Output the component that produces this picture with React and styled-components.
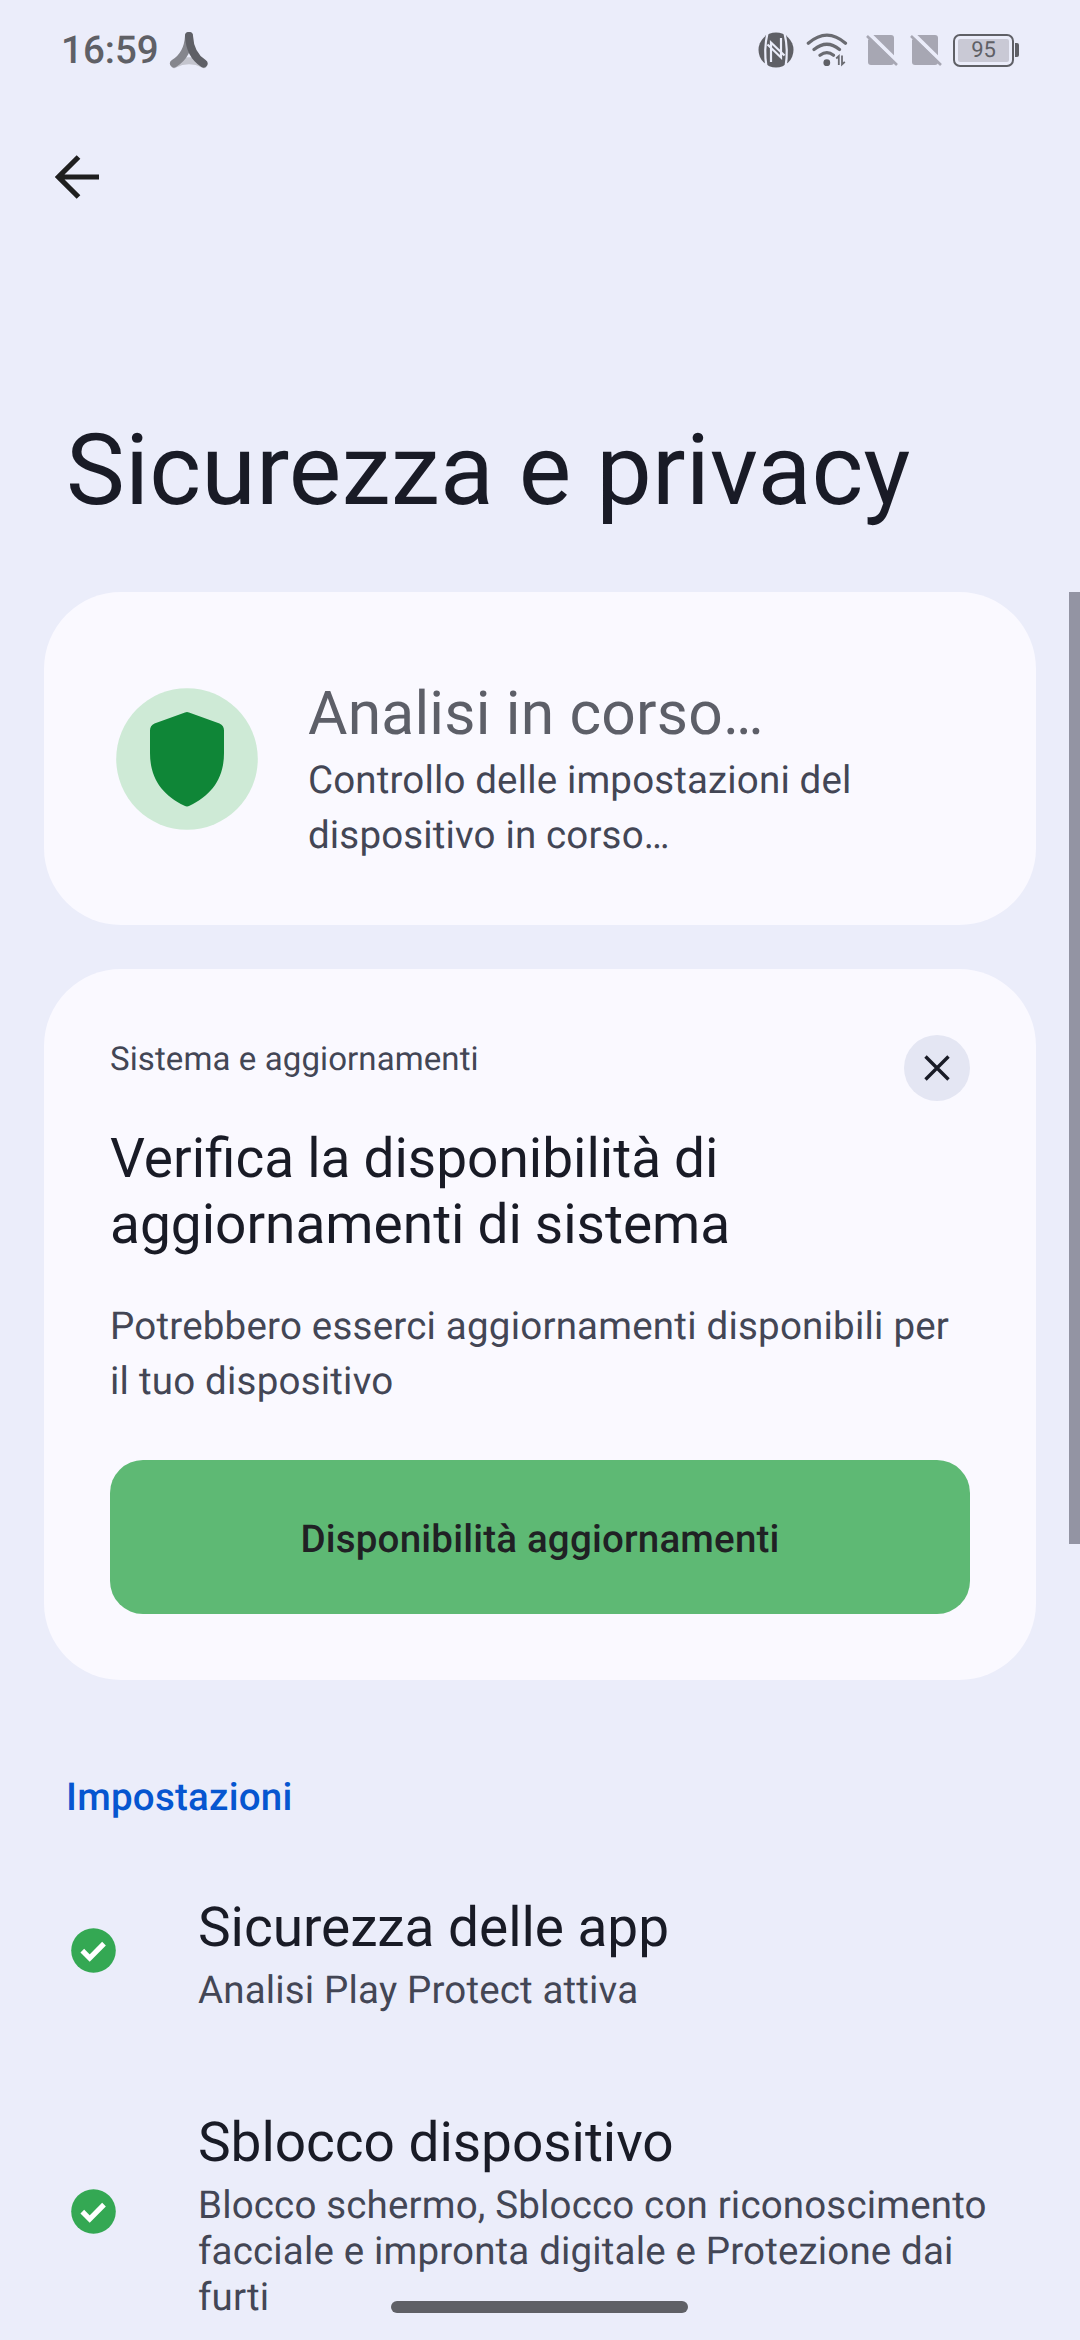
import React from 'react';
import styled, { createGlobalStyle } from 'styled-components';

const GlobalStyle = createGlobalStyle`
  * {
    box-sizing: border-box;
  }
  body {
    margin: 0;
    background: #ebedfa;
    font-family: Roboto, 'Noto Sans', sans-serif;
    text-rendering: geometricPrecision;
  }
  svg {
    display: block;
    flex: none;
  }
`;

const settings = [
  { title: 'Sicurezza delle app', lines: ['Analisi Play Protect attiva'] },
  {
    title: 'Sblocco dispositivo',
    lines: [
      'Blocco schermo, Sblocco con riconoscimento',
      'facciale e impronta digitale e Protezione dai',
      'furti',
    ],
  },
];

const AppLogoIcon = () => (
  <svg width="40" height="38" viewBox="0 0 40 38" fill="none" strokeLinecap="round">
    <path d="M5 33.5Q20 26 35 33.5" stroke="#c4c5ce" strokeWidth="7" />
    <path d="M20 5Q19 24 5 32.5" stroke="#85868d" strokeWidth="8" />
    <path d="M20 5Q21 24 34.5 32.5" stroke="#5f6066" strokeWidth="8" />
  </svg>
);

const NfcIcon = () => (
  <svg width="36" height="36" viewBox="0 0 36 36">
    <circle cx="18" cy="18" r="17.5" fill="#5f6066" />
    <g fill="none" stroke="#ebedfa" strokeWidth="2.2">
      <path d="M9.5 1Q5.5 18 8.5 35M26.5 1Q30.5 18 27.500 35" />
      <path d="M13 30V10.5L26.5 23.5M23 6V25.5L9.5 12.5" />
    </g>
  </svg>
);

const WifiIcon = () => (
  <svg width="42" height="34" viewBox="0 0 42 34" fill="none" stroke="#6a6b71" strokeLinecap="round">
    <path d="M2.3 10.3Q21 -6 39.5 10.3M8 16.5Q21 6 33.5 16.5M14 22.3Q21 17 27.5 22.3" strokeWidth="3.2" />
    <circle cx="20.8" cy="29.7" r="3.4" fill="#5f6066" stroke="none" />
    <path d="M30.2 25.5l2.6-2.4v9M36 22.5v9l2.8-2.6" strokeWidth="1.8" strokeLinecap="butt" />
  </svg>
);

const NoSimIcon = () => (
  <svg width="32" height="32" viewBox="0 0 32 32">
    <path d="M7 1h18a3 3 0 0 1 3 3v24a3 3 0 0 1-3 3H5a3 3 0 0 1-3-3V6z" fill="#a7a7b3" />
    <path d="M2 -1.5L33 29" stroke="#ebedfa" strokeWidth="4" />
    <path d="M1 2L31 31" stroke="#a7a7b3" strokeWidth="2.6" />
  </svg>
);

const BackIcon = () => (
  <svg width="44" height="44" viewBox="0 0 44 44" fill="none" stroke="#1f1f1f" strokeWidth="5.2">
    <path d="M23.5 2L3.4 22l20.1 20M3.4 22H44" />
  </svg>
);

const ShieldIcon = () => (
  <svg width="142" height="142" viewBox="0 0 142 142">
    <circle cx="71" cy="71" r="70.8" fill="#ceead6" />
    <path
      d="M69 24.5q2-.8 4 0l30.5 11q4.5 2 4.5 7V65c0 25-12 42-34.5 52.800q-2.5 1.2-5 0C46 107 34 90 34 65V42.5q0-5 4.5-7z"
      fill="#0f8637"
    />
  </svg>
);

const CheckIcon = () => (
  <svg width="45" height="45" viewBox="0 0 45 45">
    <circle cx="22.5" cy="22.5" r="22.3" fill="#34a853" />
    <path d="M11.3 22.7l7.4 7.4L33 15.6" fill="none" stroke="#fff" strokeWidth="5.2" />
  </svg>
);

const App = () => {
  return (
    <Screen>
      <GlobalStyle />
      <StatusBar>
        <Clock>16:59</Clock>
        <AppLogoIcon />
        <StatusIcons>
          <NfcIcon />
          <WifiIcon />
          <NoSimIcon />
          <NoSimIcon />
          <Battery>
            <span>95</span>
          </Battery>
        </StatusIcons>
      </StatusBar>
      <Toolbar>
        <BackIcon />
      </Toolbar>
      <PageTitle>Sicurezza e privacy</PageTitle>
      <Cards>
        <ScanCard>
          <ShieldIcon />
          <ScanText>
            <ScanTitle>Analisi in corso…</ScanTitle>
            <BodyText>
              Controllo delle impostazioni del
              <br />
              dispositivo in corso…
            </BodyText>
          </ScanText>
        </ScanCard>
        <UpdateCard>
          <UpdateHeader>
            <Label>Sistema e aggiornamenti</Label>
            <CloseButton aria-label="Chiudi">
              <svg width="26" height="26" viewBox="0 0 26 26" stroke="#191b26" strokeWidth="3.4">
                <path d="M1.5 1.5l23 23M24.5 1.5l-23 23" />
              </svg>
            </CloseButton>
          </UpdateHeader>
          <UpdateTitle>
            Verifica la disponibilità di
            <br />
            aggiornamenti di sistema
          </UpdateTitle>
          <BodyText $spacing="0.21px">
            Potrebbero esserci aggiornamenti disponibili per
            <br />
            il tuo dispositivo
          </BodyText>
          <ActionButton>Disponibilità aggiornamenti</ActionButton>
        </UpdateCard>
      </Cards>
      <SectionTitle>Impostazioni</SectionTitle>
      {settings.map(({ title, lines }) => (
        <SettingRow key={title}>
          <CheckIcon />
          <div>
            <SettingTitle>{title}</SettingTitle>
            {lines.map((line) => (
              <SettingSummary key={line}>{line}</SettingSummary>
            ))}
          </div>
        </SettingRow>
      ))}
      <ScrollThumb />
      <HomeIndicator />
    </Screen>
  );
};

const Screen = styled.div`
  position: relative;
  width: 1080px;
  height: 2340px;
  overflow: hidden;
  background: #ebedfa;
  color: #191b26;
  white-space: nowrap;
`;

const StatusBar = styled.header`
  display: flex;
  align-items: center;
  height: 100px;
  padding: 0 60px 0 61px;
  color: #5f6066;
`;

const Clock = styled.span`
  width: 108px;
  font-size: 38.5px;
  font-weight: 500;
`;

const StatusIcons = styled.div`
  display: flex;
  align-items: center;
  margin-left: auto;
  svg:nth-child(2) {
    margin-left: 12px;
  }
  svg:nth-child(3) {
    margin-left: 18px;
  }
  svg:nth-child(4) {
    margin-left: 12px;
  }
`;

const Battery = styled.div`
  position: relative;
  width: 61px;
  height: 33px;
  margin: 0 6px 0 11px;
  padding: 3px;
  border: 2px solid #5f6066;
  border-radius: 7px;
  span {
    display: block;
    height: 23px;
    border-radius: 2px;
    background: #c9c9d5;
    font-size: 22px;
    line-height: 24px;
    text-align: center;
  }
  &::after {
    content: '';
    position: absolute;
    top: 7px;
    right: -7px;
    width: 4px;
    height: 14px;
    border-radius: 0 2px 2px 0;
    background: #5f6066;
  }
`;

const Toolbar = styled.nav`
  height: 154px;
  padding: 55px 55px 0;
`;

const PageTitle = styled.h1`
  height: 338px;
  margin: 0;
  padding: 159px 66px 0;
  font-size: 99px;
  font-weight: 400;
  letter-spacing: 0.18px;
  line-height: 116px;
`;

const Cards = styled.main`
  display: flex;
  flex-direction: column;
  gap: 44px;
  padding: 0 44px;
`;

const Card = styled.section`
  border-radius: 77px;
  background: #faf9ff;
`;

const ScanCard = styled(Card)`
  display: flex;
  align-items: center;
  gap: 50px;
  height: 333px;
  padding: 0 72px;
`;

const ScanText = styled.div`
  padding-top: 23px;
`;

const ScanTitle = styled.h2`
  margin: 0 0 3px;
  color: #5d5f68;
  font-size: 60.5px;
  font-weight: 400;
  letter-spacing: 0.2px;
  line-height: 72px;
`;

const BodyText = styled.p`
  margin: 0;
  color: #434655;
  font-size: 38.5px;
  letter-spacing: ${({ $spacing }) => $spacing || '0.15px'};
  line-height: 55px;
`;

const UpdateCard = styled(Card)`
  height: 711px;
  padding: 66px;
`;

const UpdateHeader = styled.div`
  display: flex;
  justify-content: space-between;
  height: 91px;
`;

const Label = styled.span`
  padding-top: 3px;
  color: #434655;
  font-size: 33px;
  letter-spacing: 0.1px;
  line-height: 44px;
`;

const CloseButton = styled.button`
  display: flex;
  align-items: center;
  justify-content: center;
  width: 66px;
  height: 66px;
  padding: 0;
  border: none;
  border-radius: 50%;
  background: #e4e6f3;
`;

const UpdateTitle = styled.h2`
  margin: 0 0 41px;
  font-size: 55px;
  font-weight: 400;
  /* keeps the fi ligature, which any letter-spacing would turn off */
  word-spacing: -0.7px;
  line-height: 66px;
`;

const ActionButton = styled.button`
  width: 100%;
  height: 154px;
  margin-top: 51px;
  padding: 4px 0 0;
  border: none;
  border-radius: 33px;
  background: #5eb974;
  color: #202124;
  font-family: inherit;
  font-size: 38.5px;
  font-weight: 500;
  letter-spacing: 0.2px;
  text-rendering: inherit;
`;

const SectionTitle = styled.h3`
  margin: 95px 66px 74px;
  color: #0656d0;
  font-size: 38.5px;
  font-weight: 500;
  letter-spacing: 0.25px;
  line-height: 45px;
`;

const SettingRow = styled.section`
  display: flex;
  align-items: center;
  gap: 82px;
  margin-bottom: 95px;
  padding: 0 71px;
  svg {
    margin-bottom: 7px;
  }
`;

const SettingTitle = styled.h4`
  margin: 0 0 6px;
  font-size: 55px;
  font-weight: 400;
  letter-spacing: -0.05px;
  line-height: 68px;
`;

const SettingSummary = styled.div`
  color: #434655;
  font-size: 38.5px;
  letter-spacing: 0.16px;
  line-height: 46px;
`;

const ScrollThumb = styled.div`
  position: absolute;
  top: 592px;
  right: 0;
  width: 11px;
  height: 952px;
  background: #9394a3;
`;

const HomeIndicator = styled.div`
  position: absolute;
  bottom: 27px;
  left: 391px;
  width: 297px;
  height: 12px;
  border-radius: 6px;
  background: #5f6066;
`;

export default App;
